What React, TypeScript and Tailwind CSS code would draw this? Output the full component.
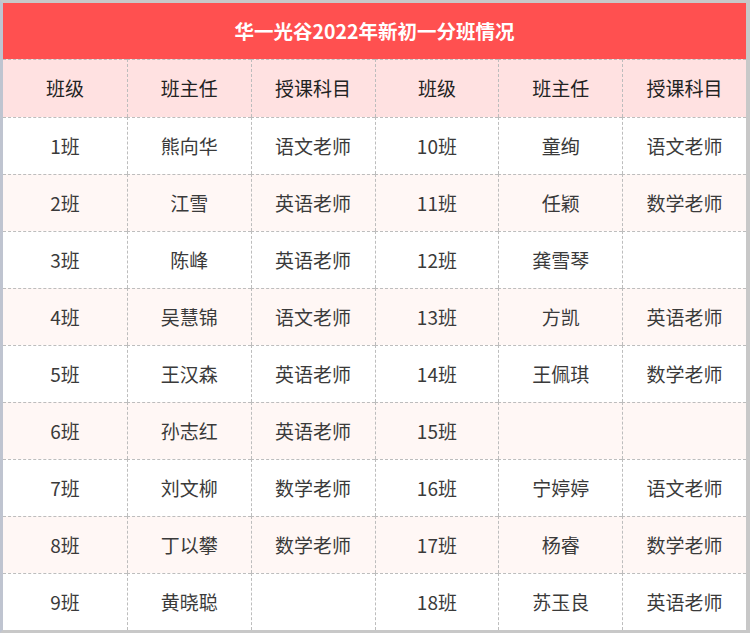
import React from 'react';

const header = ['班级', '班主任', '授课科目', '班级', '班主任', '授课科目'];

const rows: string[][] = [
  ['1班', '熊向华', '语文老师', '10班', '童绚', '语文老师'],
  ['2班', '江雪', '英语老师', '11班', '任颖', '数学老师'],
  ['3班', '陈峰', '英语老师', '12班', '龚雪琴', ''],
  ['4班', '吴慧锦', '语文老师', '13班', '方凯', '英语老师'],
  ['5班', '王汉森', '英语老师', '14班', '王佩琪', '数学老师'],
  ['6班', '孙志红', '英语老师', '15班', '', ''],
  ['7班', '刘文柳', '数学老师', '16班', '宁婷婷', '语文老师'],
  ['8班', '丁以攀', '数学老师', '17班', '杨睿', '数学老师'],
  ['9班', '黄晓聪', '', '18班', '苏玉良', '英语老师'],
];

const font = { fontFamily: '"Microsoft YaHei", "Noto Sans CJK SC", sans-serif' };

export default function App() {
  return (
    <div
      className="w-[750px] h-[633px] bg-white border-t-[3px] border-b-[3px] border-l-[3px] border-r-[4px] border-t-[#c8c8c8] border-b-[#c8c8c8] border-r-[#c8c8c8] border-l-[#bfc4d0] flex flex-col"
      style={font}
    >
      <div className="h-[56px] bg-[#ff5050] flex items-center justify-center text-white font-bold text-[19.5px]">
        华一光谷2022年新初一分班情况
      </div>

      <div className="grid grid-cols-6 h-[58px] bg-[#ffe1e1]">
        {header.map((h, i) => (
          <div
            key={i}
            className={`flex items-center justify-center text-[19px] text-[#222] border-t border-dashed border-[#bdbdbd] ${
              i > 0 ? 'border-l' : ''
            }`}
          >
            {h}
          </div>
        ))}
      </div>

      {rows.map((row, r) => (
        <div key={r} className={`grid grid-cols-6 h-[57px] ${r % 2 === 1 ? 'bg-[#fff7f5]' : 'bg-white'}`}>
          {row.map((cell, c) => (
            <div
              key={c}
              className={`flex items-center justify-center text-[19px] text-[#3a3a3a] border-t border-dashed border-[#bdbdbd] ${
                c > 0 ? 'border-l' : ''
              }`}
            >
              {cell}
            </div>
          ))}
        </div>
      ))}
    </div>
  );
}
